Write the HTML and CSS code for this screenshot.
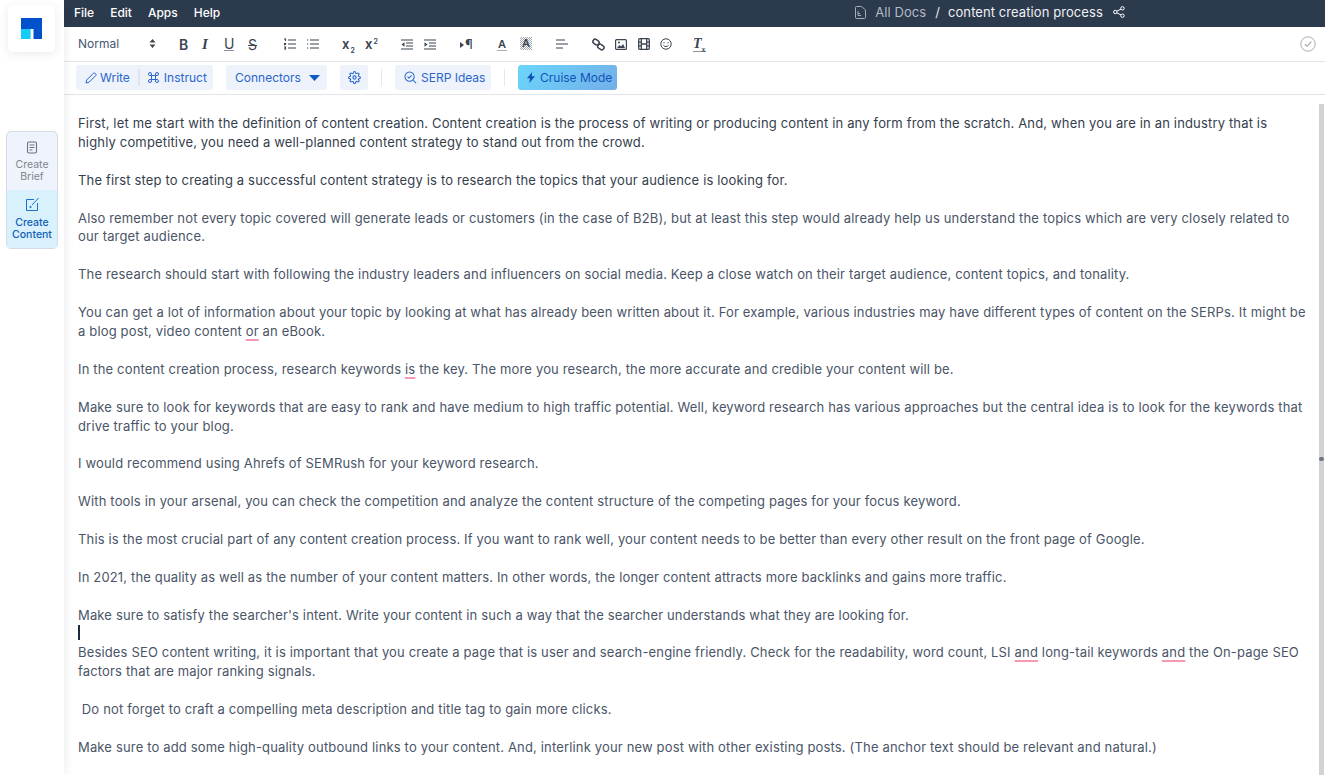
FILE: index.html
```html
<!doctype html>
<html lang="en">
    <head>
        <meta charset="UTF-8" />
        <title>content creation process</title>
        <link rel="stylesheet" href="styles.css">
    </head>
    <body>
        <aside class="sidebar">
            <div class="logo">
                <svg width="21" height="21" viewBox="0 0 21 21"><path fill="#0052cc" d="M0 0h21v21h-8.500V11H0z"/><rect x="0" y="11" width="9.600" height="10" fill="#14ccf7"/></svg>
            </div>
            <div class="modes">
                <div class="mode">
                    <svg width="12" height="13" viewBox="0 0 12 13" fill="none" stroke="#6b7280" stroke-width="1.100"><rect x="1.500" y="1" width="9" height="11" rx="1.500"/><path d="M3.500 4h5M3.500 6.500h5M3.500 9h3"/></svg>
                    <span>Create<br>Brief</span>
                </div>
                <div class="mode active">
                    <svg width="15" height="15" viewBox="0 0 15 15" fill="none" stroke="#1a73c8" stroke-width="1"><path d="M9 2.500H1.500v11h11V6"/><path d="M13.500 1 7 8"/><circle cx="5.500" cy="10" r=".7" fill="#1a73c8"/></svg>
                    <span>Create<br>Content</span>
                </div>
            </div>
        </aside>

        <main class="main">
            <header class="topbar">
                <nav class="menu">
                    <span>File</span>
                    <span>Edit</span>
                    <span>Apps</span>
                    <span>Help</span>
                </nav>
                <div class="crumbs">
                    <svg width="11" height="13" viewBox="0 0 11 13" fill="none" stroke="#a5adb8" stroke-width="1"><path d="M.5 1.500a1 1 0 0 1 1-1h5l4 3.500v7.500a1 1 0 0 1-1 1h-8a1 1 0 0 1-1-1z"/><path d="M3 5v4.500h3M3 7.500h2"/></svg>
                    <span class="all-docs">All Docs</span>
                    <span class="slash">/</span>
                    <span class="doc-name">content creation process</span>
                    <svg width="12" height="12" viewBox="0 0 12 12" fill="none" stroke="#fff" stroke-width="1"><circle cx="9.500" cy="2.300" r="1.700"/><circle cx="2.300" cy="6" r="1.700"/><circle cx="9.500" cy="9.700" r="1.700"/><path d="M3.800 5.200 8 3.100M3.800 6.800 8 8.900"/></svg>
                </div>
            </header>

            <div class="format-bar">
                <div class="style-select">
                    <span>Normal</span>
                    <svg width="7" height="9" viewBox="0 0 7 9" fill="#444"><path d="M3.500 0 6.500 3.500H.5zM3.500 9 .5 5.500h6z"/></svg>
                </div>
                <div class="tools">
                    <span class="tool t-b">B</span>
                    <span class="tool t-i">I</span>
                    <span class="tool t-u">U</span>
                    <span class="tool t-s">S</span>
                    <svg class="tool t-ol" width="12" height="12" viewBox="0 0 12 12" fill="none" stroke="#3b4450" stroke-width="1.200"><path d="M4 2h8M4 6h8M4 10h8M0 1h1.500v2M0 5.500h1.500v1H0v1M0 9h1.500v2H0"/></svg>
                    <svg class="tool t-ul" width="12" height="12" viewBox="0 0 12 12" fill="none" stroke="#3b4450" stroke-width="1.200"><path d="M3 2h9M3 6h9M3 10h9M0 2h1.200M0 6h1.200M0 10h1.200"/></svg>
                    <span class="tool t-sub">x<sub>2</sub></span>
                    <span class="tool t-sup">x<sup>2</sup></span>
                    <svg class="tool t-out" width="12" height="11" viewBox="0 0 12 11" fill="none" stroke="#3b4450" stroke-width="1.200"><path d="M0 1h12M5 4h7M5 7h7M0 10h12"/><path d="M3.500 3.200v4.600L.5 5.500z" fill="#3b4450" stroke="none"/></svg>
                    <svg class="tool t-in" width="12" height="11" viewBox="0 0 12 11" fill="none" stroke="#3b4450" stroke-width="1.200"><path d="M0 1h12M5 4h7M5 7h7M0 10h12"/><path d="M.5 3.200v4.600l3-2.300z" fill="#3b4450" stroke="none"/></svg>
                    <span class="tool t-para"><i></i>¶</span>
                    <span class="tool t-color">A</span>
                    <span class="tool t-bg">A</span>
                    <svg class="tool t-align" width="12" height="10" viewBox="0 0 12 10" fill="none" stroke="#3b4450" stroke-width="1.200"><path d="M0 1h9M0 5h12M0 9h7"/></svg>
                    <svg class="tool t-link" width="13" height="13" viewBox="0 0 13 13" fill="none" stroke="#3b4450" stroke-width="1.500"><rect x=".8" y="1.800" width="6.500" height="4.500" rx="2.200" transform="rotate(35 4 4)"/><rect x="5.700" y="6.800" width="6.500" height="4.500" rx="2.200" transform="rotate(35 9 9)"/></svg>
                    <svg class="tool t-img" width="12" height="11" viewBox="0 0 12 11"><rect x=".6" y=".6" width="10.800" height="9.800" rx="1" fill="none" stroke="#3b4450" stroke-width="1.200"/><path d="M2 9l2.500-3 1.500 1.500L8 5l2 4z" fill="#3b4450"/><circle cx="4" cy="3.500" r="1" fill="#3b4450"/></svg>
                    <svg class="tool t-film" width="12" height="12" viewBox="0 0 12 12" fill="none" stroke="#3b4450" stroke-width="1.300"><rect x=".7" y=".7" width="10.600" height="10.600" rx="1"/><path d="M3.300 .7v10.600M8.700 .7v10.600M.7 4.200h2.600M.7 7.800h2.600M8.700 4.200h2.600M8.700 7.800h2.600M3.300 6h5.400"/></svg>
                    <svg class="tool t-smile" width="12" height="12" viewBox="0 0 12 12" fill="none" stroke="#3b4450" stroke-width="1"><circle cx="6" cy="6" r="5.200"/><path d="M3.400 7.200c1 1.800 4.200 1.800 5.200 0"/><path d="M4 4.200v1M8 4.200v1" stroke-width="1.200"/></svg>
                    <span class="tool t-clear">T<sub>x</sub></span>
                </div>
                <svg class="saved" width="16" height="16" viewBox="0 0 16 16" fill="none" stroke="#a9adb2" stroke-width="1"><circle cx="8" cy="8" r="7.200"/><path d="M4.800 8.200 7 10.200l4.400-4.600" stroke-width="1.200"/></svg>
            </div>

            <div class="action-bar">
                <div class="btn-group">
                    <span class="btn-part">
                        <svg width="12" height="12" viewBox="0 0 12 12" fill="none" stroke="#2a66cc" stroke-width="1"><path d="M1 11l.7-3L8.500 1.200a1 1 0 0 1 1.400 0l.9.900a1 1 0 0 1 0 1.400L4 10.300z"/></svg>
                        Write
                    </span>
                    <span class="btn-part">
                        <svg width="11" height="11" viewBox="0 0 11 11" fill="none" stroke="#2a66cc" stroke-width="1"><path d="M3.500 3.500h4v4h-4zM3.500 3.500H2A1.500 1.500 0 1 1 3.500 2zM7.500 3.500V2A1.500 1.500 0 1 1 9 3.500zM7.500 7.500H9A1.500 1.500 0 1 1 7.500 9zM3.500 7.500V9A1.500 1.500 0 1 1 2 7.500z"/></svg>
                        Instruct
                    </span>
                </div>
                <span class="btn connectors">
                    Connectors
                    <svg width="11" height="6" viewBox="0 0 11 6" fill="#0f5bc4"><path d="M0 0h11L5.500 6z"/></svg>
                </span>
                <span class="btn gear">
                    <svg width="13" height="13" viewBox="0 0 24 24" fill="none" stroke="#2a66cc" stroke-width="2"><circle cx="12" cy="12" r="3"/><path d="M19.400 15a1.650 1.650 0 0 0 .33 1.820l.06.06a2 2 0 1 1-2.830 2.830l-.06-.06a1.650 1.650 0 0 0-2.800 1.170V21a2 2 0 0 1-4 0v-.09a1.650 1.650 0 0 0-2.800-1.170l-.06.06a2 2 0 1 1-2.830-2.830l.06-.06a1.650 1.650 0 0 0-1.170-2.800H3a2 2 0 0 1 0-4h.09a1.650 1.650 0 0 0 1.170-2.800l-.06-.06a2 2 0 1 1 2.830-2.830l.06.06a1.650 1.650 0 0 0 1.820.33h.09A1.650 1.650 0 0 0 10 3.090V3a2 2 0 0 1 4 0v.09a1.650 1.650 0 0 0 2.800 1.170l.06-.06a2 2 0 1 1 2.830 2.830l-.06.06a1.650 1.650 0 0 0-.33 1.820v.09a1.650 1.650 0 0 0 1.510 1h.09a2 2 0 0 1 0 4h-.09a1.650 1.650 0 0 0-1.510 1z"/></svg>
                </span>
                <i class="divider"></i>
                <span class="btn serp">
                    <svg width="13" height="13" viewBox="0 0 14 14" fill="none" stroke="#2a66cc" stroke-width="1.100"><circle cx="6" cy="6" r="5"/><path d="M9.700 9.700 13 13"/><path d="M3.800 6.100 5.400 7.600 8.200 4.700"/></svg>
                    SERP Ideas
                </span>
                <i class="divider"></i>
                <span class="btn cruise">
                    <svg width="8" height="11" viewBox="0 0 8 11" fill="#0f4fb0"><path d="M5.200 0 0 6.300h3L2.300 11 8 4.300H4.700z"/></svg>
                    Cruise Mode
                </span>
            </div>

            <div class="editor-wrap">
                <article class="editor">
                    <p class="lead">First, let me start with the definition of content creation. Content creation is the process of writing or producing content in any form from the scratch. And, when you are in an industry that is highly competitive, you need a well-planned content strategy to stand out from the crowd.</p>
                    <p class="blank"><br></p>
                    <p class="lead">The first step to creating a successful content strategy is to research the topics that your audience is looking for.</p>
                    <p class="blank"><br></p>
                    <p>Also remember not every topic covered will generate leads or customers (in the case of B2B), but at least this step would already help us understand the topics which are very closely related to our target audience.</p>
                    <p class="blank"><br></p>
                    <p>The research should start with following the industry leaders and influencers on social media. Keep a close watch on their target audience, content topics, and tonality.</p>
                    <p class="blank"><br></p>
                    <p>You can get a lot of information about your topic by looking at what has already been written about it. For example, various industries may have different types of content on the SERPs. It might be a blog post, video content <span class="spell">or</span> an eBook.</p>
                    <p class="blank"><br></p>
                    <p>In the content creation process, research keywords <span class="spell">is</span> the key. The more you research, the more accurate and credible your content will be.</p>
                    <p class="blank"><br></p>
                    <p>Make sure to look for keywords that are easy to rank and have medium to high traffic potential. Well, keyword research has various approaches but the central idea is to look for the keywords that drive traffic to your blog.</p>
                    <p class="blank"><br></p>
                    <p>I would recommend using Ahrefs of SEMRush for your keyword research.</p>
                    <p class="blank"><br></p>
                    <p>With tools in your arsenal, you can check the competition and analyze the content structure of the competing pages for your focus keyword.</p>
                    <p class="blank"><br></p>
                    <p>This is the most crucial part of any content creation process. If you want to rank well, your content needs to be better than every other result on the front page of Google.</p>
                    <p class="blank"><br></p>
                    <p>In 2021, the quality as well as the number of your content matters. In other words, the longer content attracts more backlinks and gains more traffic.</p>
                    <p class="blank"><br></p>
                    <p>Make sure to satisfy the searcher's intent. Write your content in such a way that the searcher understands what they are looking for.</p>
                    <p class="caret-line"><i class="caret"></i></p>
                    <p>Besides SEO content writing, it is important that you create a page that is user and search-engine friendly. Check for the readability, word count, LSI <span class="spell">and</span> long-tail keywords <span class="spell">and</span> the On-page SEO factors that are major ranking signals.</p>
                    <p class="blank"><br></p>
                    <p>&nbsp;Do not forget to craft a compelling meta description and title tag to gain more clicks.</p>
                    <p class="blank"><br></p>
                    <p>Make sure to add some high-quality outbound links to your content. And, interlink your new post with other existing posts. (The anchor text should be relevant and natural.)</p>
                </article>
                <div class="scrollbar"><i class="splitter"></i></div>
            </div>
        </main>
    </body>
</html>
```

FILE: styles.css
```css
* {
    box-sizing: border-box;
}

html,
body {
    height: 100%;
}

body {
    margin: 0;
    display: flex;
    overflow: hidden;
    background: #fff;
    font-family: Inter, "Liberation Sans", sans-serif;
    color: #3f4a5a;
}

.sidebar {
    width: 64px;
    flex: none;
    padding: 5px 6px 0 8px;
    background: #fff;
    box-shadow: 2px 0 8px rgba(40, 50, 70, 0.08);
    z-index: 1;
}

.logo {
    width: 47px;
    height: 47px;
    display: flex;
    align-items: center;
    justify-content: center;
    border-radius: 5px;
    box-shadow: 0 2px 10px rgba(40, 50, 70, 0.1);
}

.modes {
    width: 52px;
    margin: 79px 0 0 -2px;
    border: 1px solid #d3dbe5;
    border-radius: 5px;
    overflow: hidden;
    background: #eff3fb;
}

.mode {
    height: 58px;
    padding-top: 9px;
    display: flex;
    flex-direction: column;
    align-items: center;
    gap: 5px;
    font-size: 10.5px;
    line-height: 12px;
    text-align: center;
    color: #80868f;
}

.mode.active {
    height: 58px;
    padding-top: 7px;
    background: #d9f1fd;
    color: #1160b8;
    font-weight: 500;
}

.main {
    flex: 1;
    min-width: 0;
    display: flex;
    flex-direction: column;
}

.topbar {
    height: 27px;
    flex: none;
    display: flex;
    align-items: center;
    padding-bottom: 3px;
    background: #2c3a4d;
    color: #fff;
}

.menu {
    display: flex;
    gap: 16px;
    margin-left: 10px;
    font-size: 12px;
    font-weight: 500;
}

.crumbs {
    display: flex;
    align-items: center;
    margin-left: 635px;
    font-size: 13px;
    letter-spacing: 0.08px;
}

.all-docs {
    margin-left: 9px;
    color: #b4bbc5;
}

.slash {
    margin: 0 8px 0 9px;
    color: #e4e7eb;
}

.doc-name {
    margin-right: 10px;
    color: #eef0f3;
}

.format-bar {
    height: 35px;
    flex: none;
    display: flex;
    align-items: center;
    border-bottom: 1px solid #e2e4e7;
    color: #3b4450;
}

.style-select {
    width: 78px;
    margin-left: 14px;
    padding-bottom: 2px;
    display: flex;
    align-items: center;
    justify-content: space-between;
    font-size: 12px;
    color: #46586f;
}

.tools {
    position: relative;
    flex: 1;
    height: 100%;
}

.tool {
    position: absolute;
    top: 10px;
    font-size: 14px;
    line-height: 15px;
    color: #3b4450;
}

.t-b { left: 23px; font-weight: 600; }
.t-i { left: 46px; font-style: italic; font-family: "Liberation Serif", serif; font-size: 15px; font-weight: 700; }
.t-u { left: 68px; line-height: 13px; border-bottom: 1px solid #8a929c; }
.t-s { left: 92px; text-decoration: line-through; }
.t-ol { top: 11px; left: 128px; }
.t-ul { top: 11px; left: 151px; }
.t-sub { left: 186px; font-size: 13px; font-weight: 600; }
.t-sup { left: 209px; font-size: 13px; font-weight: 600; }
.t-sub sub, .t-sup sup { font-size: 7px; line-height: 0; margin-left: 1px; }
.t-out { top: 12px; left: 245px; }
.t-in { top: 12px; left: 268px; }
.t-para { left: 304px; display: flex; align-items: center; font-size: 13px; }
.t-para i { margin-right: 1px; border-left: 4px solid #3b4450; border-top: 3px solid transparent; border-bottom: 3px solid transparent; }
.t-color { left: 341px; top: 11px; font-weight: 600; font-size: 11px; line-height: 12px; border-bottom: 1px solid #a6acb4; padding: 0 1px; }
.t-bg { left: 364px; top: 10px; width: 12px; text-align: center; font-weight: 600; font-size: 11px; line-height: 13px; background: repeating-conic-gradient(#a4aab3 0 25%, #fff 0 50%) 0 0 / 2px 2px; }
.t-align { left: 400px; top: 12px; }
.t-link { top: 11px; left: 436px; }
.t-img { top: 12px; left: 459px; }
.t-film { top: 11px; left: 482px; }
.t-smile { top: 11px; left: 504px; }
.t-clear { left: 537px; top: 9px; font-family: "Liberation Serif", serif; font-style: italic; font-weight: 700; border-bottom: 1px solid #8a929c; }
.t-clear sub { font-size: 8px; line-height: 0; }

.saved {
    margin-right: 9px;
}

.action-bar {
    height: 33px;
    flex: none;
    display: flex;
    align-items: flex-start;
    padding: 3px 0 0 12px;
    border-bottom: 1px solid #e2e4e7;
    font-size: 12px;
    color: #2a66cc;
    white-space: nowrap;
}

.action-bar svg {
    flex: none;
}

.btn-group,
.btn {
    flex: none;
    height: 25px;
    display: flex;
    align-items: center;
    border-radius: 3px;
    background: #edf2fb;
}

.btn-group {
    width: 137px;
    margin-right: 13px;
}

.btn-part {
    height: 100%;
    display: flex;
    align-items: center;
    gap: 3px;
    padding: 0 8px 0 9px;
}

.btn-part + .btn-part {
    position: relative;
    gap: 5px;
    padding-left: 10px;
}

.btn-part + .btn-part::before {
    content: "";
    position: absolute;
    left: 0;
    top: 4px;
    bottom: 4px;
    width: 2px;
    background: #dfe4ec;
}

.btn {
    gap: 5px;
    padding: 0;
}

.connectors {
    width: 101px;
    padding-left: 9px;
    gap: 8px;
}

.gear {
    width: 28px;
    margin-left: 13px;
    justify-content: center;
}

.divider {
    flex: none;
    width: 1px;
    height: 17px;
    margin: 4px 13px 0;
    background: #e6e8ec;
}

.serp {
    width: 96px;
    padding-left: 9px;
    gap: 4px;
}

.cruise {
    width: 99px;
    padding-left: 9px;
    background: linear-gradient(135deg, #6bd6fb, #74aee9);
    color: #1055b8;
}

.editor-wrap {
    position: relative;
    flex: 1;
    min-height: 0;
    overflow: hidden;
}

.editor {
    height: 100%;
    padding: 19px 17px 0 14px;
    overflow: hidden;
    font-size: 13px;
    line-height: 18.9px;
    letter-spacing: 0.16px;
    color: #4a5567;
}

.editor p {
    margin: 0;
}

.editor .lead {
    color: #353e4c;
}

.editor .caret-line {
    height: 18.9px;
    padding-top: 1px;
}

.caret {
    display: block;
    width: 2px;
    height: 15px;
    background: #1d2a40;
}

.spell {
    text-decoration: underline 2px #f59ab0;
    text-decoration-skip-ink: none;
    text-underline-offset: 3px;
}

.scrollbar {
    position: absolute;
    top: 9px;
    right: 1px;
    bottom: 0;
    width: 5px;
    background: #d3d3d3;
}

.splitter {
    position: absolute;
    top: 353px;
    right: 0;
    width: 5px;
    height: 4px;
    background: #6b7584;
    border-radius: 2px;
}
```
